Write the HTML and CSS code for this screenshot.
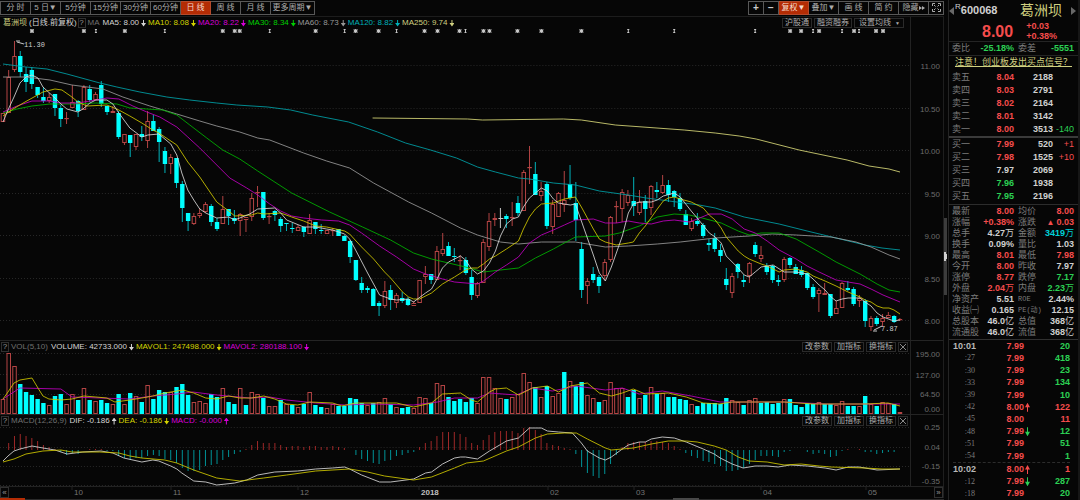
FILE: index.html
```html
<!DOCTYPE html>
<html lang="zh-CN">
<head>
<meta charset="utf-8">
<title>葛洲坝 600068</title>
<link rel="stylesheet" href="styles.css">
</head>
<body>
<main class="charts">
  <nav class="toolbar">
    <div class="group">
      <button>分 时</button><button>5 日▼</button><button>5分钟</button><button>15分钟</button><button>30分钟</button><button>60分钟</button><button class="active">日 线</button><button>周 线</button><button>月 线</button><button class="wide">更多周期▼</button>
    </div>
    <div class="group">
      <button class="narrow bold">+</button><button class="narrow bold">−</button><button class="active">复权▼</button><button>叠加▼</button><button>画 线</button><button>简 约</button><button class="tight">隐藏<svg class="ic" width="6" height="6" viewBox="0 0 6 6"><path d="M0 1l3 2-3 2zM3 1l3 2-3 2z" fill="currentColor"/></svg></button><button class="narrow" aria-label="全屏"><svg class="ic" width="9" height="9" viewBox="0 0 9 9"><path d="M.5 3V.5H3M6 .5h2.500V3M8.500 6v2.500H6M3 8.500H.5V6M3.500 3.500L2 2M5.500 3.500L7 2M3.500 5.500L2 7M5.500 5.500L7 7" fill="none" stroke="currentColor"/></svg></button>
    </div>
  </nav>

  <section class="pane">
    <div class="plot">
      <header class="legend">
        <span class="stock">葛洲坝</span><span class="white period">(日线.前复权)</span><button class="help">?</button><span class="dim title">MA</span>
        <span class="item white">MA5: 8.00<i class="down"></i></span>
        <span class="item yellow">MA10: 8.08<i class="down"></i></span>
        <span class="item magenta">MA20: 8.22<i class="down"></i></span>
        <span class="item green">MA30: 8.34<i class="down"></i></span>
        <span class="item gray">MA60: 8.73<i class="down"></i></span>
        <span class="item teal">MA120: 8.82<i class="down"></i></span>
        <span class="item pale">MA250: 9.74<i class="down"></i></span>
        <div class="tools"><button>沪股通</button><button>融资融券</button><button class="drop">设置均线<small>▼</small></button></div>
      </header>
      <svg id="price" class="canvas price" viewBox="0 29 911 311" preserveAspectRatio="none"></svg>
    </div>
    <svg class="axis" width="32" height="323" viewBox="0 17 32 323">
      <text x="29" y="69">11.00</text><text x="29" y="112">10.50</text><text x="29" y="154">10.00</text><text x="29" y="197">9.50</text><text x="29" y="239">9.00</text><text x="29" y="282">8.50</text><text x="29" y="324">8.00</text>
    </svg>
  </section>

  <section class="pane line">
    <div class="plot">
      <header class="legend">
        <button class="help first">?</button><span class="dim title">VOL(5,10)</span>
        <span class="item white">VOLUME: 42733.000<i class="down"></i></span>
        <span class="item yellow">MAVOL1: 247498.000<i class="down"></i></span>
        <span class="item magenta">MAVOL2: 280188.100<i class="down"></i></span>
        <div class="tools edge"><button>改参数</button><button>加指标</button><button>换指标</button><button class="close" aria-label="关闭"></button></div>
      </header>
      <svg id="volume" class="canvas volume" viewBox="0 353 911 61" preserveAspectRatio="none"></svg>
    </div>
    <svg class="axis" width="32" height="73" viewBox="0 341 32 73">
      <text x="29" y="357">195.00</text><text x="29" y="378">127.00</text><text x="29" y="397">64.50</text><text x="29" y="412">0.00</text>
    </svg>
  </section>

  <section class="pane line">
    <div class="plot">
      <header class="legend">
        <button class="help first">?</button><span class="dim title">MACD(12,26,9)</span>
        <span class="item white">DIF: -0.186<i class="up"></i></span>
        <span class="item yellow">DEA: -0.186<i class="down"></i></span>
        <span class="item magenta">MACD: -0.000<i class="up"></i></span>
        <div class="tools edge"><button>改参数</button><button>加指标</button><button>换指标</button><button class="close" aria-label="关闭"></button></div>
      </header>
      <svg id="macd" class="canvas macd" viewBox="0 427 911 59" preserveAspectRatio="none"></svg>
    </div>
    <svg class="axis" width="32" height="71" viewBox="0 415 32 71">
      <text x="29" y="430">0.25</text><text x="29" y="450">0.04</text><text x="29" y="469">-0.15</text><text x="29" y="484">-0.35</text>
    </svg>
  </section>

  <footer class="timeline">
    <button>«</button>
    <svg id="months" class="months"></svg>
    <button>»</button>
  </footer>
  <div class="strip"><span class="hot"></span><span class="thumb"></span></div>
</main>

<div class="splitter"><button class="handle" aria-label="收起"></button></div>

<aside class="quote">
  <header class="head">
    <div class="name"><i class="prev"></i><sup>R</sup><b>600068</b><strong>葛洲坝</strong><i class="next"></i></div>
    <div class="last"><b>8.00</b><span>+0.03<br>+0.38%</span></div>
  </header>
  <div class="ratio"><span>委比</span><b class="g">-25.18%</b><span>委差</span><b class="g">-5551</b></div>
  <div class="notice"><a href="#">注意！创业板发出买点信号？</a></div>
  <table class="book asks">
    <tbody>
    <tr><th>卖五</th><td class="r">8.04</td><td>2188</td><td></td></tr>
    <tr><th>卖四</th><td class="r">8.03</td><td>2791</td><td></td></tr>
    <tr><th>卖三</th><td class="r">8.02</td><td>2164</td><td></td></tr>
    <tr><th>卖二</th><td class="r">8.01</td><td>3142</td><td></td></tr>
    <tr><th>卖一</th><td class="r">8.00</td><td>3513</td><td class="g thin">-140</td></tr>
    </tbody>
  </table>
  <table class="book bids">
    <tbody>
    <tr><th>买一</th><td class="r">7.99</td><td>520</td><td class="r thin">+1</td></tr>
    <tr><th>买二</th><td class="r">7.98</td><td>1525</td><td class="r thin">+10</td></tr>
    <tr><th>买三</th><td>7.97</td><td>2069</td><td></td></tr>
    <tr><th>买四</th><td class="g">7.96</td><td>1938</td><td></td></tr>
    <tr><th>买五</th><td class="g">7.95</td><td>2196</td><td></td></tr>
    </tbody>
  </table>
  <table class="stats">
    <tbody>
    <tr><th>最新</th><td class="r">8.00</td><th>均价</th><td class="r">8.00</td></tr>
    <tr><th>涨幅</th><td class="r">+0.38%</td><th>涨跌</th><td class="r"><small>▲</small>0.03</td></tr>
    <tr><th>总手</th><td>4.27<em>万</em></td><th>金额</th><td class="c">3419<em>万</em></td></tr>
    <tr><th>换手</th><td>0.09%</td><th>量比</th><td>1.03</td></tr>
    <tr><th>最高</th><td class="r">8.01</td><th>最低</th><td class="r">7.98</td></tr>
    <tr><th>今开</th><td class="r">8.00</td><th>昨收</th><td>7.97</td></tr>
    <tr><th>涨停</th><td class="r">8.77</td><th>跌停</th><td class="g">7.17</td></tr>
    <tr><th>外盘</th><td class="r">2.04<em>万</em></td><th>内盘</th><td class="g">2.23<em>万</em></td></tr>
    <tr><th>净资产</th><td>5.51</td><th class="mono">ROE</th><td>2.44%</td></tr>
    <tr><th>收益㈠</th><td>0.165</td><th class="mono">PE(动)</th><td>12.15</td></tr>
    <tr><th>总股本</th><td>46.0<em>亿</em></td><th>总值</th><td>368<em>亿</em></td></tr>
    <tr><th>流通股</th><td>46.0<em>亿</em></td><th>流值</th><td>368<em>亿</em></td></tr>
    </tbody>
  </table>
  <table class="trades">
    <tbody>
    <tr><th class="minute">10:01</th><td class="r">7.99</td><td></td><td class="g">20</td></tr>
    <tr><th>:27</th><td class="r">7.99</td><td></td><td class="g">418</td></tr>
    <tr><th>:30</th><td class="r">7.99</td><td></td><td class="g">23</td></tr>
    <tr><th>:33</th><td class="r">7.99</td><td></td><td class="g">134</td></tr>
    <tr><th>:39</th><td class="r">7.99</td><td></td><td class="g">10</td></tr>
    <tr><th>:42</th><td class="r">8.00</td><td class="r"><i class="up"></i></td><td class="r">122</td></tr>
    <tr><th>:45</th><td class="r">8.00</td><td></td><td class="r">11</td></tr>
    <tr><th>:48</th><td class="r">7.99</td><td class="g"><i class="down"></i></td><td class="g">12</td></tr>
    <tr><th>:51</th><td class="r">7.99</td><td></td><td class="g">51</td></tr>
    <tr><th>:54</th><td class="r">7.99</td><td></td><td class="g">1</td></tr>
    <tr class="break"><th class="minute">10:02</th><td class="r">8.00</td><td class="r"><i class="up"></i></td><td class="r">1</td></tr>
    <tr><th>:12</th><td class="r">7.99</td><td class="g"><i class="down"></i></td><td class="g">287</td></tr>
    <tr><th>:18</th><td class="r">7.99</td><td></td><td class="g">20</td></tr>
    </tbody>
  </table>
</aside>
<script src="chart.js"></script>
</body>
</html>
```
FILE: styles.css
```css
* { box-sizing: border-box; }

body {
  margin: 0;
  min-height: 100vh;
  display: grid;
  grid-template-columns: minmax(0, 1fr) 4px 132px;
  background: #060606;
  color: #d0d0d0;
  font: 8px/10px "Liberation Sans", "Noto Sans CJK SC", sans-serif;
}

button {
  margin: 0;
  padding: 0;
  border: 1px solid #303030;
  background: none;
  color: #acacac;
  font: inherit;
  white-space: nowrap;
}

.charts { display: flex; flex-direction: column; min-width: 0; }

/* toolbar */
.toolbar {
  display: flex;
  justify-content: space-between;
  height: 17px;
  padding: 1px 0;
  border-bottom: 1px solid #1c1c1c;
}
.group { display: flex; border-left: 1px solid #585858; }
.group button {
  width: 30px;
  border-color: #585858;
  border-left: 0;
}
.group .narrow { width: 15px; }
.group .wide { width: 44px; }
.group .bold { font-weight: bold; font-size: 10px; color: #ccc; }
.group .active { background: #b42c04; border-color: #b44a2c; color: #f4dcd0; }
.ic { vertical-align: middle; }

/* chart panes */
.pane { display: grid; grid-template-columns: minmax(0, 1fr) 32px; border-right: 1px solid #1e1e1e; }
.pane.line { border-top: 1px solid #242424; }
.plot { border-right: 1px solid #222; min-width: 0; }
.legend { display: flex; align-items: center; height: 12px; white-space: nowrap; }
.stock { margin-left: 3px; color: #d0d080; }
.period { margin-left: 2px; }
.help { width: 8px; height: 10px; line-height: 8px; margin-left: 1px; color: #989898; }
.title { margin: 0 3px 0 2px; }
.item { display: flex; align-items: center; gap: 2px; margin-right: 2px; }
.white { color: #d4d4d4; }
.yellow { color: #d4d400; }
.magenta { color: #d800d8; }
.green { color: #00d000; }
.gray { color: #989898; }
.teal { color: #00b0b8; }
.pale { color: #d0d080; }
.dim { color: #707070; }
.tools { display: flex; gap: 2px; margin: 0 6px 0 auto; }
.tools.edge { margin-right: 2px; }
.tools button { height: 10px; line-height: 8px; padding: 0 2px; border-color: #2a2a2a; }
.tools small { font-size: 5px; margin-left: 4px; }
.tools .drop { padding: 0 3px 0 4px; }
.tools .close {
  width: 10px;
  background:
    linear-gradient(45deg, transparent 46%, #888 46%, #888 54%, transparent 54%) center / 6px 6px no-repeat,
    linear-gradient(-45deg, transparent 46%, #888 46%, #888 54%, transparent 54%) center / 6px 6px no-repeat;
}

.up, .down { display: block; width: 5px; height: 7px; background: currentColor; }
.down { clip-path: polygon(40% 0, 60% 0, 60% 50%, 100% 50%, 50% 100%, 0 50%, 40% 50%); }
.up { clip-path: polygon(50% 0, 100% 50%, 60% 50%, 60% 100%, 40% 100%, 40% 50%, 0 50%); }

.canvas { display: block; width: 100%; }
.price { height: 311px; }
.volume { height: 61px; }
.macd { height: 59px; }
.axis { display: block; }
.axis text { fill: #6c6c6c; text-anchor: end; }

.grid { stroke: #282828; stroke-dasharray: 1 2; }
.ma { fill: none; stroke-width: 1; opacity: .85; }
.rise { fill: #060606; stroke: #b44444; }
.fall { fill: #00ffff; }
.rise-wick { stroke: #b44444; }
.fall-wick { stroke: #00b4bc; }
.flat { stroke: #c8c8c8; }
.hist-rise { stroke: #a02828; }
.hist-fall { stroke: #009498; }
.mark { stroke: #c8c8c8; fill: #c8c8c8; }
.note { fill: #d0d0d0; font: 7px "Liberation Mono", monospace; }

/* time axis */
.timeline { display: flex; height: 12px; border-top: 1px solid #222; border-right: 1px solid #1e1e1e; }
.timeline button { width: 9px; line-height: 8px; color: #989898; }
.months { flex: 1; height: 11px; min-width: 0; }
.months text { fill: #747474; }
.months .year { fill: #c0c0c0; font-weight: bold; }
.months line { stroke: #222; }
.strip { height: 2px; display: flex; justify-content: space-between; padding-right: 26%; border-bottom: 1px solid #2a2a2a; }
.strip span { height: 2px; }
.strip .hot { width: 25px; background: #b42c04; }
.strip .thumb { width: 26px; background: #484848; }

.splitter { display: flex; align-items: center; }
.handle {
  width: 3px;
  height: 77px;
  margin-top: 13px;
  border: 0;
  background: radial-gradient(ellipse 3px 5px at left center, #d0d0d0 98%, #3c3c3c);
}

/* quote sidebar */
.quote { display: flex; flex-direction: column; border-left: 1px solid #242424; border-right: 2px solid #161616; font-size: 9px; line-height: 11px; }
.quote table { border-spacing: 0; display: flex; flex-direction: column; }
.quote tbody { display: grid; flex: 1; }
.quote tr { display: grid; align-items: center; }
.quote th { padding: 0; font-weight: normal; text-align: left; color: #7c7c7c; white-space: nowrap; }
.quote td { padding: 0; font-weight: bold; text-align: right; white-space: nowrap; }
.quote em { font-style: normal; font-weight: normal; }
.quote .r { color: #f44c4c; }
.quote .g { color: #2cd054; }
.quote .c { color: #00d0d8; }
.quote .thin { font-weight: normal; }

.head { height: 42px; border-bottom: 1px solid #242424; }
.name { display: flex; align-items: center; height: 21px; font-size: 11px; }
.name sup { font-size: 8px; line-height: 8px; margin: -8px 0 0 1px; }
.name strong { margin-left: auto; font-weight: normal; font-size: 14px; color: #d0d080; }
.prev, .next { border: 4px solid transparent; }
.prev { border-left: 0; border-right: 5px solid #686868; }
.next { border-right: 0; border-left: 5px solid #686868; margin-left: 9px; margin-right: 2px; }
.last { display: flex; align-items: center; padding-left: 33px; color: #f44c4c; }
.last b { font-size: 16px; }
.last span { margin-left: 13px; font-weight: bold; line-height: 10px; font-size: 9px; }

.ratio { display: grid; grid-template-columns: 24px 38px 24px 1fr; align-items: center; height: 14px; padding: 0 4px 0 3px; border-bottom: 1px solid #242424; color: #7c7c7c; }
.ratio b { text-align: right; }
.ratio span + b + span { padding-left: 4px; }
.notice { height: 15px; line-height: 13px; text-align: center; white-space: nowrap; }
.notice a { color: #d0d080; }

.book { padding: 0 4px 0 3px; }
.book tr { grid-template-columns: 24px 38px 39px 1fr; height: 13px; }
.asks { border-bottom: 2px solid #3a3a3a; }
.bids { border-bottom: 1px solid #2c2c2c; padding-bottom: 1px; }
.stats { padding: 1px 4px 1px 3px; border-bottom: 1px solid #303030; }
.stats tr { grid-template-columns: 28px 34px 28px 1fr; height: 11px; }
.stats td + th { padding-left: 4px; }
.stats small { font-size: 8px; margin-right: 2px; }
.quote .mono { font-family: "Liberation Mono", "Noto Sans CJK SC", monospace; font-size: 7px; }
.trades { flex: 1; padding: 0 8px 0 4px; }
.trades tr { grid-template-columns: 22px 49px 7px 1fr; }
.trades .break { border-top: 1px dashed #2c2c2c; }
.quote .trades th { text-align: right; font: 8px/10px "Liberation Serif", serif; }
.quote .trades .minute { font: bold 9px/11px "Liberation Sans", sans-serif; text-align: left; color: #b8b8b8; }
.trades i { height: 9px; margin-left: 1px; }
```
FILE: chart.js
```js
// Each candle: direction, high, body top, body bottom, low (plot units).
const candles = `u113 113 122 122,u70 77 113 113,u41 56 70 72,d51 56 72 77,d67 74 82 92,d67 70 84 89,d87 87 95 98,d87 97 101 103,u93 97 101 103,d94 94 108 116,
d105 108 119 127,u112 118 119 124,u85 102 108 108,d100 101 111 117,u85 87 110 110,d85 89 100 102,u92 94 100 100,d81 85 104 107,d106 106 112 115,u106 111 113 113,
d111 113 137 139,u134 134 143 145,d135 135 143 157,u134 134 147 150,d126 134 137 141,u111 121 141 148,d115 121 131 131,d127 129 142 162,d147 151 164 173,u154 157 164 174,
d158 158 183 188,d181 184 208 222,d213 213 221 231,u213 216 224 225,u208 213 216 218,u202 204 212 213,d204 206 222 226,d218 222 229 231,u196 209 224 224,d209 209 216 225,
d210 218 221 224,u213 214 221 236,u217 217 220 232,u193 198 217 221,u186 192 193 207,d192 192 218 220,u213 216 216 224,d210 211 215 221,d217 219 226 232,d223 223 224 231,
d223 228 229 233,u225 227 231 231,d226 227 232 237,u214 220 234 234,d222 222 229 234,d224 230 231 234,u230 230 234 234,u228 230 231 236,d229 229 236 236,d235 236 241 241,
d240 241 257 263,d260 260 280 281,d277 283 290 293,d286 288 290 293,d288 289 306 306,d301 303 306 316,u281 291 306 308,d285 290 300 310,u293 295 303 308,d292 298 301 303,
d297 299 305 306,u301 303 306 306,u280 280 303 303,u266 274 277 284,d274 274 280 284,u246 251 280 280,u233 249 254 256,d242 246 256 256,d248 256 257 262,u255 260 260 270,
d257 260 273 275,d270 277 295 300,u282 283 296 298,u239 242 283 283,u213 221 247 251,u213 218 220 226,w208 218 218 228,d214 216 219 228,u202 217 217 226,d196 203 213 216,
u170 172 211 211,u146 167 167 184,d162 174 195 195,u182 191 196 201,d182 184 226 229,u200 204 227 234,u192 193 217 217,u171 200 205 212,d165 184 198 200,d182 203 220 241,
d242 249 290 298,u278 281 286 304,d267 274 280 283,d275 277 286 293,u259 262 276 280,u216 217 260 262,u201 206 206 223,u189 192 209 222,u190 195 203 206,d177 201 206 216,
u190 202 213 215,d195 201 209 222,u185 186 208 215,d182 190 192 198,u175 185 193 194,d180 185 195 202,d190 191 197 207,d193 198 209 211,d210 214 225 225,u218 221 229 231,
d213 221 224 226,d223 225 236 238,d239 243 245 251,d233 238 249 252,d244 250 256 262,d268 279 285 290,u273 276 293 298,d263 264 272 278,d275 280 282 287,u262 263 276 283,
d242 245 254 257,u246 255 259 262,d263 266 272 275,d265 266 280 283,d275 280 282 286,u257 259 280 282,d257 258 265 268,d264 267 274 274,d266 270 275 277,d273 273 288 290,
d284 287 297 299,u288 290 294 312,u283 293 295 295,d294 294 316 318,u301 308 314 314,u282 283 308 308,d281 288 290 291,d287 289 304 306,u295 298 301 307,d299 301 321 327,
u316 318 327 331,d316 318 324 326,u314 318 322 327,u312 315 318 318,d315 316 322 323,u318 319 319 321`;

// Top edge of each volume bar; negative marks a falling day.
const volumes = [399,353,366,-384,-392,-395,-399,-403,405,-396,-394,404,394,-400,388,-400,401,-400,-403,404,
-394,404,-393,396,-402,385,-399,-390,-392,392,-387,-384,-395,402,401,403,-394,-397,388,-402,
-404,388,-405,392,394,-398,406,406,-400,404,-405,407,-404,392,-405,-407,408,404,-406,-406,
-398,-399,-403,405,-403,402,398,-404,407,-408,-407,408,397,398,-403,383,385,-397,-401,-399,
-402,-398,403,377,377,388,398,-399,397,394,373,382,-387,397,-386,396,393,-372,381,-386,
-382,395,398,-402,400,382,388,388,-397,-390,398,-395,387,-394,393,-397,-397,-399,-400,404,
-406,-403,-403,-403,-404,-398,400,402,-405,400,398,-403,-402,-404,-403,399,-399,-405,-407,-403,
-404,402,-404,-404,405,401,-406,-406,406,-396,404,-406,402,403,-404,412];

const histogram = [450,443,436,434,436,438,441,445,447,449,452,455,453,454,450,449,449,449,451,451,
456,458,460,458,458,456,455,456,459,460,463,468,471,471,470,466,465,464,460,457,
454,452,449,445,441,443,443,443,445,447,446,446,447,446,446,447,447,446,447,448,
450,455,459,461,463,464,461,460,456,455,453,452,447,443,441,436,432,432,432,434,
437,443,445,440,435,432,431,431,431,433,428,427,430,434,443,445,446,448,449,454,
467,473,476,478,474,464,455,447,443,442,442,442,441,441,442,443,446,449,453,456,
458,461,462,464,466,471,471,470,468,464,460,456,456,456,457,452,451,450,450,452,
454,453,454,457,456,451,449,450,449,452,452,454,453,452,452,450];

const priceLines = {
  '#d8d878': '373,118 468,119 483,120 564,119 582,120 616,125 685,130 716,133 740,136 757,139 800,150 848,160 870,166 890,169 901,172',
  '#00a0a8': '3,64 26,67 47,69 67,74 100,83 117,87 140,92 167,97 190,100 217,103 237,105 268,107 291,110 313,115 349,122 378,132 406,143 431,150 457,158 478,167 496,172 519,178 530,179 554,183 576,185 600,191 629,195 647,198 670,201 700,205 716,208 745,217 780,224 808,231 837,238 866,245 883,248 901,250',
  '#989898': '3,77 26,77 50,80 72,85 103,89 123,97 150,106 177,114 200,121 217,126 240,132 258,138 270,140 304,153 327,161 350,168 374,183 409,202 432,213 461,228 478,235 501,242 519,244 542,242 576,242 606,247 629,246 658,244 681,242 716,238 750,236 773,234 797,235 832,237 857,242 872,247 890,255 901,259',
  '#00b400': '3,113 17,109 32,106 50,104 72,104 96,103 117,104 130,108 147,109 163,110 177,115 190,125 207,138 223,150 240,159 258,171 292,193 330,212 363,227 391,240 414,253 432,259 449,263 466,267 484,272 501,270 519,268 536,258 554,249 576,237 606,236 620,233 640,226 658,217 675,214 690,215 703,218 722,223 739,231 750,235 762,233 780,233 797,239 820,252 837,262 861,274 878,284 890,290 901,292',
  '#c000c0': '3,112 17,106 32,101 50,101 61,103 78,103 96,100 107,98 119,99 133,106 147,112 160,117 177,127 188,137 200,148 217,165 230,178 247,188 258,195 270,204 281,211 292,216 304,218 322,220 339,221 350,225 362,233 380,246 397,257 414,269 426,274 443,279 455,282 478,284 484,281 496,272 507,265 519,257 530,243 542,235 554,230 565,225 576,220 594,219 606,223 617,223 629,221 640,223 652,224 664,221 675,220 690,222 698,219 710,214 722,214 733,219 745,229 756,233 768,241 780,250 797,259 808,266 820,272 837,280 861,284 872,289 884,295 901,302',
  '#d0c800': '3,116 13,109 25,102 43,92 55,89 62,90 72,97 78,102 87,106 107,105 119,110 130,116 142,123 153,130 159,133 177,145 188,162 200,177 217,202 229,211 235,216 252,215 258,213 264,214 281,213 292,217 304,221 316,226 327,227 345,231 350,234 362,247 374,259 385,272 391,278 403,292 409,297 414,299 420,299 432,293 443,284 455,277 466,270 472,268 478,268 484,264 490,259 496,256 507,249 519,241 524,229 530,217 536,209 542,204 554,203 565,199 576,197 582,207 588,218 594,229 600,239 606,242 617,245 629,243 634,242 640,233 646,226 658,209 664,201 669,198 675,197 681,199 692,202 704,208 710,215 716,220 722,228 727,237 733,244 739,251 745,256 750,259 762,264 768,266 780,272 785,270 797,269 808,272 814,276 826,281 837,286 849,292 861,297 866,300 872,302 878,306 884,308 890,308 895,310 901,314',
  '#d8d8d8': '3,122 8,110 14,97 20,83 26,77 32,75 38,78 43,87 55,98 61,104 67,109 78,112 83,109 90,103 96,100 107,100 113,104 119,113 130,128 142,137 148,135 159,134 171,144 177,155 182,173 188,190 194,200 200,209 206,213 217,218 229,217 235,220 250,214 258,209 275,208 281,213 287,220 304,227 316,227 327,229 333,230 345,234 350,239 356,250 368,273 380,295 391,299 397,300 409,299 414,302 426,293 432,289 438,278 443,268 449,262 461,256 466,260 472,269 478,274 484,271 490,263 496,251 501,236 507,224 513,219 519,217 524,207 530,198 542,188 548,191 554,199 559,203 571,205 576,204 582,221 588,238 594,255 600,273 606,281 612,267 617,253 623,236 629,213 634,204 640,202 652,202 658,200 664,196 675,193 681,197 692,211 698,218 710,233 716,237 722,243 727,256 739,268 745,275 750,277 756,272 762,267 774,265 785,272 797,272 808,274 814,279 820,285 826,290 832,297 837,301 843,299 849,298 861,298 866,302 872,306 878,313 884,317 895,321 901,320'
};
const volumeLines = {
  '#c000c0': '3,399 20,388 61,389 72,397 100,398 130,399 153,396 177,394 193,392 217,395 250,398 270,397 287,400 316,403 345,405 374,404 414,405 438,402 455,398 478,398 490,393 517,395 533,388 553,391 577,386 606,390 623,388 640,394 663,391 692,396 721,402 785,402 827,404 901,404',
  '#d0c800': '3,399 8,392 14,383 20,380 32,378 38,388 43,396 49,399 61,400 72,399 84,396 96,397 107,398 115,402 130,400 142,398 153,396 165,393 177,391 183,390 194,393 206,398 217,399 229,396 240,398 252,398 264,396 275,399 287,404 298,405 310,402 333,403 342,406 356,403 397,403 414,407 432,403 443,394 461,393 472,400 478,402 490,392 496,389 507,388 519,395 533,388 548,386 559,392 571,386 588,383 600,393 612,396 623,393 634,389 646,394 669,393 687,397 704,403 720,404 733,402 785,402 814,404 866,404 889,403 901,406'
};
const macdLines = {
  '#d8d8d8': '3,461 8,456 14,451 20,449 32,446 43,448 55,450 67,454 83,452 101,451 113,453 124,458 142,462 153,460 159,461 171,466 177,469 182,473 194,481 206,482 217,485 235,483 247,480 258,475 275,472 298,471 316,469 333,468 345,467 350,469 362,475 380,482 391,482 414,479 426,473 432,472 443,464 455,458 461,457 466,457 478,459 490,451 507,441 519,438 530,428 542,428 548,431 559,432 573,433 582,443 588,451 600,458 606,460 612,457 623,449 629,445 640,442 646,442 652,439 663,437 675,438 687,442 704,449 715,454 721,458 733,464 744,468 756,466 768,466 779,467 791,465 808,466 826,468 837,470 849,467 860,467 878,470 901,469',
  '#d0c800': '3,462 14,459 26,454 43,451 61,450 72,452 100,452 119,453 130,456 142,458 165,460 177,463 194,470 217,478 240,481 264,478 287,475 316,471 350,469 368,472 385,476 414,480 432,477 455,468 467,463 484,461 507,451 519,447 536,438 548,434 565,433 577,433 588,439 606,448 612,450 634,448 652,444 669,441 687,441 698,442 715,446 727,450 739,457 750,461 768,462 785,465 802,464 820,466 832,467 866,468 883,469 901,469'
};
const stars = [32,84,125,223,235,240,316,356,379,425,438,460,484,490,518,542,582,791,802,820,855,877,884];
const pins = [96,165,270,345,397,466,629,675,756,814,843,860];
const months = [[72,'10'],[171,'11'],[298,'12'],[419,'2018'],[548,'02'],[634,'03'],[761,'04'],[866,'05']];

const WIDTH = 911;
const STEP = 898 / 155;
const xAt = i => 2.7 + i * STEP;

const grid = ys => ys.map(y => `<line class="grid" x1="0" x2="${WIDTH}" y1="${y + .5}" y2="${y + .5}"/>`).join('');
const vline = (cls, x, y1, y2) => `<line class="${cls}" x1="${x}" x2="${x}" y1="${y1}" y2="${y2}"/>`;
const bar = (rise, x, top, bottom) => rise
  ? `<rect class="rise" x="${x - 1.5}" y="${top + .5}" width="3.5" height="${Math.max(bottom - top - 1, 0.2)}"/>`
  : `<rect class="fall" x="${x - 2}" y="${top}" width="4.4" height="${Math.max(bottom - top, 1)}"/>`;
const lines = set => Object.entries(set).map(([color, points]) =>
  `<polyline class="ma" stroke="${color}" points="${points}"/>`).join('');

function drawPrice() {
  let out = grid([65, 108, 150, 193, 235, 278, 320]);
  candles.split(',').forEach((text, i) => {
    const item = text.trim();
    const [high, top, bottom, low] = item.slice(1).split(' ').map(Number);
    const x = xAt(i);
    if (item[0] === 'w') {
      out += vline('flat', x, high, low) + `<line class="flat" x1="${x - 2}" x2="${x + 3}" y1="${top + .5}" y2="${top + .5}"/>`;
      return;
    }
    const rise = item[0] === 'u';
    out += vline(rise ? 'rise-wick' : 'fall-wick', x + .2, high, low) + bar(rise, x, top, bottom);
  });
  out += lines(priceLines);
  stars.forEach(x => {
    out += `<g class="mark"><circle cx="${x}" cy="31" r="1.2"/><path d="M${x - 2} 31h4M${x} 29v4M${x - 2} 29l4 4M${x + 2} 29l-4 4" stroke-width=".8"/></g>`;
  });
  pins.forEach(x => {
    out += `<path class="mark" d="M${x} 29v4M${x - 1} 29.500h2M${x - 1} 32.500h2" stroke-width="1"/>`;
  });
  out += '<path class="mark" d="M16 41l4 0M17 42l7 2" fill="none"/><text class="note" x="24" y="47">11.30</text>';
  out += '<path class="mark" d="M874 331l4 0M875 330l8-4" fill="none"/><text class="note" x="882" y="331">7.87</text>';
  document.getElementById('price').innerHTML = out;
}

function drawVolume() {
  let out = grid([353, 374, 394]);
  volumes.forEach((v, i) => { out += bar(v > 0, xAt(i), Math.abs(v), 414); });
  document.getElementById('volume').innerHTML = out + lines(volumeLines);
}

function drawMacd() {
  let out = grid([427, 447, 466, 485]);
  histogram.forEach((y, i) => {
    if (y !== 450) out += vline(y < 450 ? 'hist-rise' : 'hist-fall', xAt(i) + .2, 450, y);
  });
  document.getElementById('macd').innerHTML = out + lines(macdLines);
}

function drawMonths() {
  const span = 925;
  document.getElementById('months').innerHTML = months.map(([x, label]) => {
    const at = p => `${(p - 9) / span * 100}%`;
    return `<line x1="${at(x)}" x2="${at(x)}" y1="0" y2="3"/><text class="${label.length > 2 ? 'year' : ''}" x="${at(x + 2)}" y="8">${label}</text>`;
  }).join('');
}

drawPrice();
drawVolume();
drawMacd();
drawMonths();
```
